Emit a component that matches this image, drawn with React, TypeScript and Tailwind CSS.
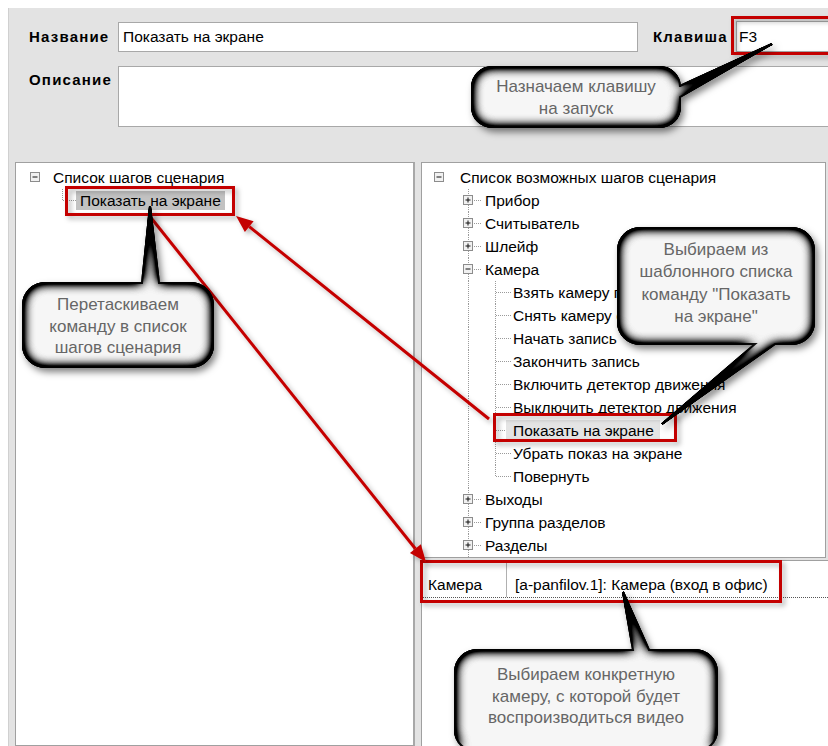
import React from "react";

type Node = {
  text: string;
  level: 0 | 1 | 2;
  exp?: "plus" | "minus";
  last?: boolean;
  hl?: boolean;
};

const rightTree: Node[] = [
  { text: "Список возможных шагов сценария", level: 0, exp: "minus" },
  { text: "Прибор", level: 1, exp: "plus" },
  { text: "Считыватель", level: 1, exp: "plus" },
  { text: "Шлейф", level: 1, exp: "plus" },
  { text: "Камера", level: 1, exp: "minus" },
  { text: "Взять камеру под охрану", level: 2 },
  { text: "Снять камеру с охраны", level: 2 },
  { text: "Начать запись", level: 2 },
  { text: "Закончить запись", level: 2 },
  { text: "Включить детектор движения", level: 2 },
  { text: "Выключить детектор движения", level: 2 },
  { text: "Показать на экране", level: 2, hl: true },
  { text: "Убрать показ на экране", level: 2 },
  { text: "Повернуть", level: 2, last: true },
  { text: "Выходы", level: 1, exp: "plus" },
  { text: "Группа разделов", level: 1, exp: "plus" },
  { text: "Разделы", level: 1, exp: "plus" },
];

const dot = { stroke: "#9a9a9a", strokeDasharray: "1 1", strokeWidth: 1 };

function Expander({ x, y, minus }: { x: number; y: number; minus?: boolean }) {
  return (
    <g>
      <rect x={x + 0.5} y={y + 0.5} width={9} height={9} fill="#f1f1f1" stroke="#8c8c8c" />
      <line x1={x + 2.5} y1={y + 5} x2={x + 7.5} y2={y + 5} stroke="#111" />
      {!minus && <line x1={x + 5} y1={y + 2.5} x2={x + 5} y2={y + 7.5} stroke="#111" />}
    </g>
  );
}

function RightGuide({ n }: { n: Node }) {
  const w = n.level === 0 ? 36 : n.level === 1 ? 61 : 89;
  return (
    <svg width={w} height={23} className="shrink-0">
      {n.level === 0 && <Expander x={12} y={6} minus />}
      {n.level === 1 && (
        <>
          <line x1={46.5} y1={0} x2={46.5} y2={23} {...dot} />
          <line x1={52} y1={11.5} x2={60} y2={11.5} {...dot} />
          <Expander x={41} y={6} minus={n.exp === "minus"} />
        </>
      )}
      {n.level === 2 && (
        <>
          <line x1={46.5} y1={0} x2={46.5} y2={23} {...dot} />
          <line x1={73.5} y1={0} x2={73.5} y2={n.last ? 11.5 : 23} {...dot} />
          <line x1={74} y1={11.5} x2={89} y2={11.5} {...dot} />
        </>
      )}
    </svg>
  );
}

function RightTree() {
  return (
    <div className="pt-[3px] text-[15.5px] leading-none">
      {rightTree.map((n) => (
        <div key={n.text} className="flex items-center h-[23px] whitespace-nowrap">
          <RightGuide n={n} />
          <span
            className={
              n.hl
                ? "bg-[#e4e4e4] -ml-[5px] pl-[7px] pr-[6px] h-[21px] flex items-center"
                : "pl-[2px]"
            }
          >
            {n.text}
          </span>
        </div>
      ))}
    </div>
  );
}

function LeftTree() {
  return (
    <div className="pt-[3px] text-[15.5px] leading-none">
      <div className="flex items-center h-[23px] whitespace-nowrap">
        <svg width={37} height={23} className="shrink-0">
          <Expander x={14} y={6} minus />
        </svg>
        <span>Список шагов сценария</span>
      </div>
      <div className="flex items-center h-[23px] whitespace-nowrap">
        <svg width={60} height={23} className="shrink-0">
          <line x1={46.5} y1={0} x2={46.5} y2={11.5} {...dot} />
          <line x1={47} y1={11.5} x2={60} y2={11.5} {...dot} />
        </svg>
        <span className="bg-[#c2c2c2] h-[19px] flex items-center pl-[4px] pr-[4px]">
          Показать на экране
        </span>
      </div>
    </div>
  );
}

function arrowHead(x1: number, y1: number, x2: number, y2: number, len = 17, half = 7) {
  const dx = x2 - x1;
  const dy = y2 - y1;
  const L = Math.hypot(dx, dy);
  const ux = dx / L;
  const uy = dy / L;
  const bx = x2 - ux * len;
  const by = y2 - uy * len;
  return {
    pts: `${x2},${y2} ${bx - uy * half},${by + ux * half} ${bx + uy * half},${by - ux * half}`,
    bx,
    by,
  };
}

function bubblePath(
  x0: number,
  y0: number,
  x1: number,
  y1: number,
  r: number,
  side: "top" | "right" | "bottom",
  a: number,
  b: number,
  tx: number,
  ty: number
) {
  let d = `M${x0 + r},${y0}`;
  if (side === "top") d += ` L${a},${y0} L${tx},${ty} L${b},${y0}`;
  d += ` L${x1 - r},${y0} A${r},${r} 0 0 1 ${x1},${y0 + r}`;
  if (side === "right") d += ` L${x1},${a} L${tx},${ty} L${x1},${b}`;
  d += ` L${x1},${y1 - r} A${r},${r} 0 0 1 ${x1 - r},${y1}`;
  if (side === "bottom") d += ` L${b},${y1} L${tx},${ty} L${a},${y1}`;
  d += ` L${x0 + r},${y1} A${r},${r} 0 0 1 ${x0},${y1 - r} L${x0},${y0 + r} A${r},${r} 0 0 1 ${x0 + r},${y0} Z`;
  return d;
}

const RED = "#c40000";

function Arrow({ x1, y1, x2, y2 }: { x1: number; y1: number; x2: number; y2: number }) {
  const h = arrowHead(x1, y1, x2, y2);
  return (
    <g filter="url(#sh)">
      <line x1={x1} y1={y1} x2={h.bx} y2={h.by} stroke={RED} strokeWidth={3} />
      <polygon points={h.pts} fill={RED} />
    </g>
  );
}

function Overlay() {
  const bubbles = [
    bubblePath(472, 67, 680, 127, 20, "right", 86, 97, 772, 44),
    bubblePath(23, 283, 213, 367, 22, "top", 142, 159, 150, 206),
    bubblePath(618, 228, 814, 344, 22, "bottom", 755, 775, 662, 424),
    bubblePath(455, 650, 717, 752, 22, "top", 633, 649, 623, 592),
  ];
  return (
    <svg className="absolute left-0 top-0 pointer-events-none" width={828} height={746}>
      <defs>
        <filter id="sh" filterUnits="userSpaceOnUse" x={0} y={0} width={828} height={746}>
          <feGaussianBlur in="SourceAlpha" stdDeviation="2.5" />
          <feOffset dx="3" dy="3" result="o" />
          <feFlood floodColor="#000" floodOpacity="0.3" />
          <feComposite in2="o" operator="in" result="s" />
          <feMerge>
            <feMergeNode in="s" />
            <feMergeNode in="SourceGraphic" />
          </feMerge>
        </filter>
        <filter
          id="bub"
          filterUnits="userSpaceOnUse"
          x={0}
          y={0}
          width={828}
          height={746}
          colorInterpolationFilters="sRGB"
        >
          <feFlood floodColor="#000" result="blk" />
          <feComposite in="blk" in2="SourceAlpha" operator="out" result="out" />
          <feGaussianBlur in="out" stdDeviation="6" result="outb" />
          <feComposite in="outb" in2="SourceAlpha" operator="in" result="inner0" />
          <feComponentTransfer in="inner0" result="inner">
            <feFuncA type="linear" slope="2.8" />
          </feComponentTransfer>
          <feGaussianBlur in="SourceAlpha" stdDeviation="3.5" result="sb" />
          <feOffset in="sb" dx="3" dy="4" result="so" />
          <feFlood floodColor="#000" floodOpacity="0.5" result="sc" />
          <feComposite in="sc" in2="so" operator="in" result="shadow" />
          <feMerge>
            <feMergeNode in="shadow" />
            <feMergeNode in="SourceGraphic" />
            <feMergeNode in="inner" />
          </feMerge>
        </filter>
      </defs>

      <g filter="url(#sh)" fill="none" stroke={RED} strokeWidth={3}>
        <rect x={732.5} y={17.5} width={110} height={36} />
        <rect x={66.5} y={187.5} width={167} height={27} />
        <rect x={494.5} y={414.5} width={181} height={26} />
        <rect x={421.5} y={561.5} width={359} height={40} />
      </g>

      <Arrow x1={489} y1={419} x2={236} y2={216} />
      <Arrow x1={148} y1={214} x2={426} y2={562} />

      {bubbles.map((d, i) => (
        <path key={i} d={d} fill="#f6f6f6" stroke="#111" strokeWidth={2} filter="url(#bub)" />
      ))}
    </svg>
  );
}

function Callout({
  left,
  top,
  width,
  lh,
  lines,
}: {
  left: number;
  top: number;
  width: number;
  lh: string;
  lines: string[];
}) {
  return (
    <div
      className={`absolute text-center text-[17px] text-[#666] ${lh}`}
      style={{ left, top, width }}
    >
      {lines.map((l) => (
        <div key={l}>{l}</div>
      ))}
    </div>
  );
}

export default function App() {
  return (
    <div className="relative w-[828px] h-[746px] overflow-hidden bg-white font-['Liberation_Sans',Arial,sans-serif] text-black">
      <div className="ml-[8px] mt-[8px] w-[820px] h-[738px] bg-[#e3e3e3] border-l border-[#d0d0d0] flex flex-col">
        <div className="h-[154px] shrink-0 pt-[14px] pl-[20px] flex flex-col">
          <div className="flex items-center h-[30px]">
            <div className="w-[89px] shrink-0 font-bold text-[15px] tracking-[1.2px]">Название</div>
            <div className="w-[520px] shrink-0 h-[30px] bg-white border border-[#a8a8a8] flex items-center pl-[4px] text-[15.5px]">
              Показать на экране
            </div>
            <div className="w-[98px] shrink-0 pl-[15px] font-bold text-[15px] tracking-[1.2px]">Клавиша</div>
            <div className="w-[120px] shrink-0 h-[31px] -mt-[1px] bg-white border border-[#a8a8a8] flex items-center pl-[2px] text-[15.5px]">
              F3
            </div>
          </div>
          <div className="flex mt-[14px]">
            <div className="w-[89px] shrink-0 pt-[3px] font-bold text-[15px] tracking-[1.2px]">Описание</div>
            <div className="w-[720px] shrink-0 h-[61px] bg-white border border-[#a8a8a8]" />
          </div>
        </div>

        <div className="flex-1 flex min-h-0">
          <div className="ml-[6px] w-[400px] shrink-0 bg-white border border-[#a0a0a0] border-r-2 border-r-[#a8a8a8]">
            <LeftTree />
          </div>
          <div className="ml-[6px] w-[407px] shrink-0 flex flex-col">
            <div className="h-[396px] shrink-0 bg-white border border-[#a0a0a0] w-[405px] overflow-hidden">
              <RightTree />
            </div>
            <div className="mt-[2px] flex-1 bg-white border-l border-t border-[#a0a0a0]">
              <div className="flex h-[37px] border-b border-dotted border-[#555] text-[15.5px]">
                <div className="w-[85px] shrink-0 pl-[6px] pt-[12px] border-r border-[#b0b0b0]">Камера</div>
                <div className="pl-[8px] pt-[12px] whitespace-nowrap">[a-panfilov.1]: Камера (вход в офис)</div>
              </div>
            </div>
          </div>
        </div>
      </div>

      <Overlay />

      <Callout left={472} top={76} width={208} lh="leading-[22px]" lines={["Назначаем клавишу", "на запуск"]} />
      <Callout
        left={23}
        top={294}
        width={190}
        lh="leading-[21.5px]"
        lines={["Перетаскиваем", "команду в список", "шагов сценария"]}
      />
      <Callout
        left={618}
        top={239}
        width={196}
        lh="leading-[22.3px]"
        lines={["Выбираем из", "шаблонного списка", "команду \"Показать", "на экране\""]}
      />
      <Callout
        left={455}
        top={664}
        width={262}
        lh="leading-[21.5px]"
        lines={["Выбираем конкретную", "камеру, с которой будет", "воспроизводиться видео"]}
      />
    </div>
  );
}
